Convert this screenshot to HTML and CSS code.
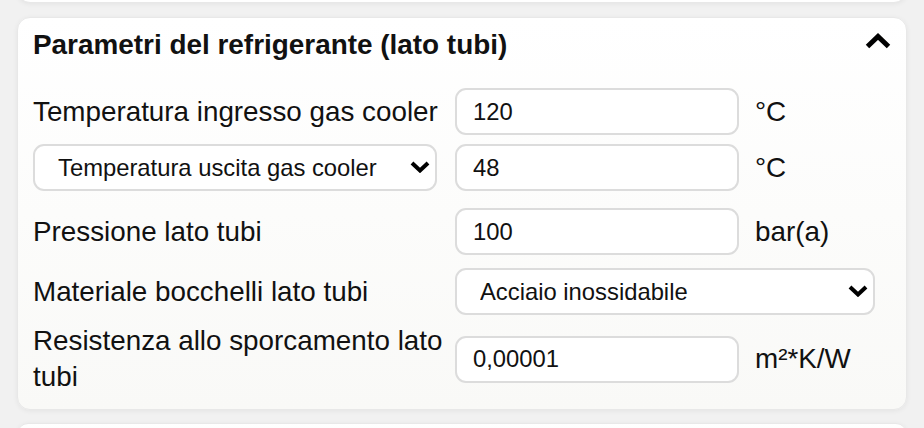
FILE: index.html
```html
<html lang="it">
<head>
    <meta charset="UTF-8">
    <meta name="viewport" content="width=device-width, initial-scale=1.0">
    <title>Parametri del refrigerante</title>
    <link rel="stylesheet" href="styles.css">
</head>
<body>
    <div class="stack">
        <div class="card card-prev"></div>

        <div class="card">
            <div class="card-header">
                <div class="card-title">Parametri del refrigerante (lato tubi)</div>
                <svg class="toggle" width="26" height="16" viewBox="0 0 26 16">
                    <polyline points="2.5,13.5 13,3.5 23.5,13.5" fill="none" stroke="#000" stroke-width="5"/>
                </svg>
            </div>

            <div class="row row-1">
                <div class="label">Temperatura ingresso gas cooler</div>
                <input class="field" type="text" value="120">
                <div class="unit">°C</div>
            </div>

            <div class="row row-2">
                <div class="label">
                    <div class="select-wrap label-select">
                        <select class="field-select">
                            <option>Temperatura uscita gas cooler</option>
                        </select>
                        <svg class="arrow" width="20" height="12" viewBox="0 0 20 12">
                            <polyline points="2,2 10,9.5 18,2" fill="none" stroke="#000" stroke-width="4"/>
                        </svg>
                    </div>
                </div>
                <input class="field" type="text" value="48">
                <div class="unit">°C</div>
            </div>

            <div class="row row-3">
                <div class="label">Pressione lato tubi</div>
                <input class="field" type="text" value="100">
                <div class="unit">bar(a)</div>
            </div>

            <div class="row row-4">
                <div class="label">Materiale bocchelli lato tubi</div>
                <div class="select-wrap wide-select">
                    <select class="field-select">
                        <option>Acciaio inossidabile</option>
                    </select>
                    <svg class="arrow" width="20" height="12" viewBox="0 0 20 12">
                        <polyline points="2,2 10,9.5 18,2" fill="none" stroke="#000" stroke-width="4"/>
                    </svg>
                </div>
            </div>

            <div class="row row-5">
                <div class="label">Resistenza allo sporcamento lato tubi</div>
                <input class="field" type="text" value="0,00001">
                <div class="unit">m²*K/W</div>
            </div>
        </div>

        <div class="card card-next"></div>
    </div>
</body>
</html>
```

FILE: styles.css
```css
body {
    font-family: "Liberation Sans", Arial, sans-serif;
    background-color: #f1f1f1;
    color: #111111;
    margin: 0;
    height: 428px;
    overflow: hidden;
}
.stack {
    display: flex;
    flex-direction: column;
    gap: 14px;
    padding: 0 17px;
    margin-top: -40px;
}
.card {
    background: linear-gradient(#ffffff, #f9f9f7);
    border: 1px solid #e8e8e8;
    border-radius: 13px;
    box-shadow: 0 1px 5px rgba(0, 0, 0, 0.06);
    padding: 11px 16px 14px 15px;
}
.card-prev {
    height: 41px;
    padding: 0;
    background: #ffffff;
}
.card-next {
    height: 20px;
    padding: 0;
    margin-top: -1px;
}
.card-header {
    display: flex;
    justify-content: space-between;
    align-items: center;
    margin-bottom: 27px;
}
.card-title {
    font-size: 27.9px;
    font-weight: bold;
}
.toggle {
    margin-top: -9px;
    margin-right: -1px;
}
.row {
    display: flex;
    align-items: center;
}
.row-2 {
    margin-top: 9px;
}
.row-3 {
    margin-top: 17px;
}
.row-4 {
    margin-top: 13px;
}
.row-5 {
    margin-top: 8px;
}
.label {
    width: 412px;
    margin-right: 10px;
    font-size: 27.8px;
    line-height: 36px;
}
.field {
    width: 284px;
    height: 47px;
    box-sizing: border-box;
    border: 2px solid #dcdcdc;
    border-radius: 11px;
    background-color: #ffffff;
    padding: 0 16px;
    font-family: inherit;
    font-size: 23.8px;
    color: #111111;
    outline: none;
}
.unit {
    margin-left: 16px;
    font-size: 27.8px;
}
.select-wrap {
    position: relative;
    display: flex;
}
.label-select {
    width: 404px;
}
.wide-select {
    width: 420px;
}
.field-select {
    appearance: none;
    width: 100%;
    height: 47px;
    box-sizing: border-box;
    border: 2px solid #dcdcdc;
    border-radius: 11px;
    background-color: #ffffff;
    padding: 0 40px 0 23px;
    font-family: inherit;
    font-size: 23.8px;
    color: #111111;
    outline: none;
}
.arrow {
    position: absolute;
    right: 7px;
    top: 17px;
    pointer-events: none;
}
```
